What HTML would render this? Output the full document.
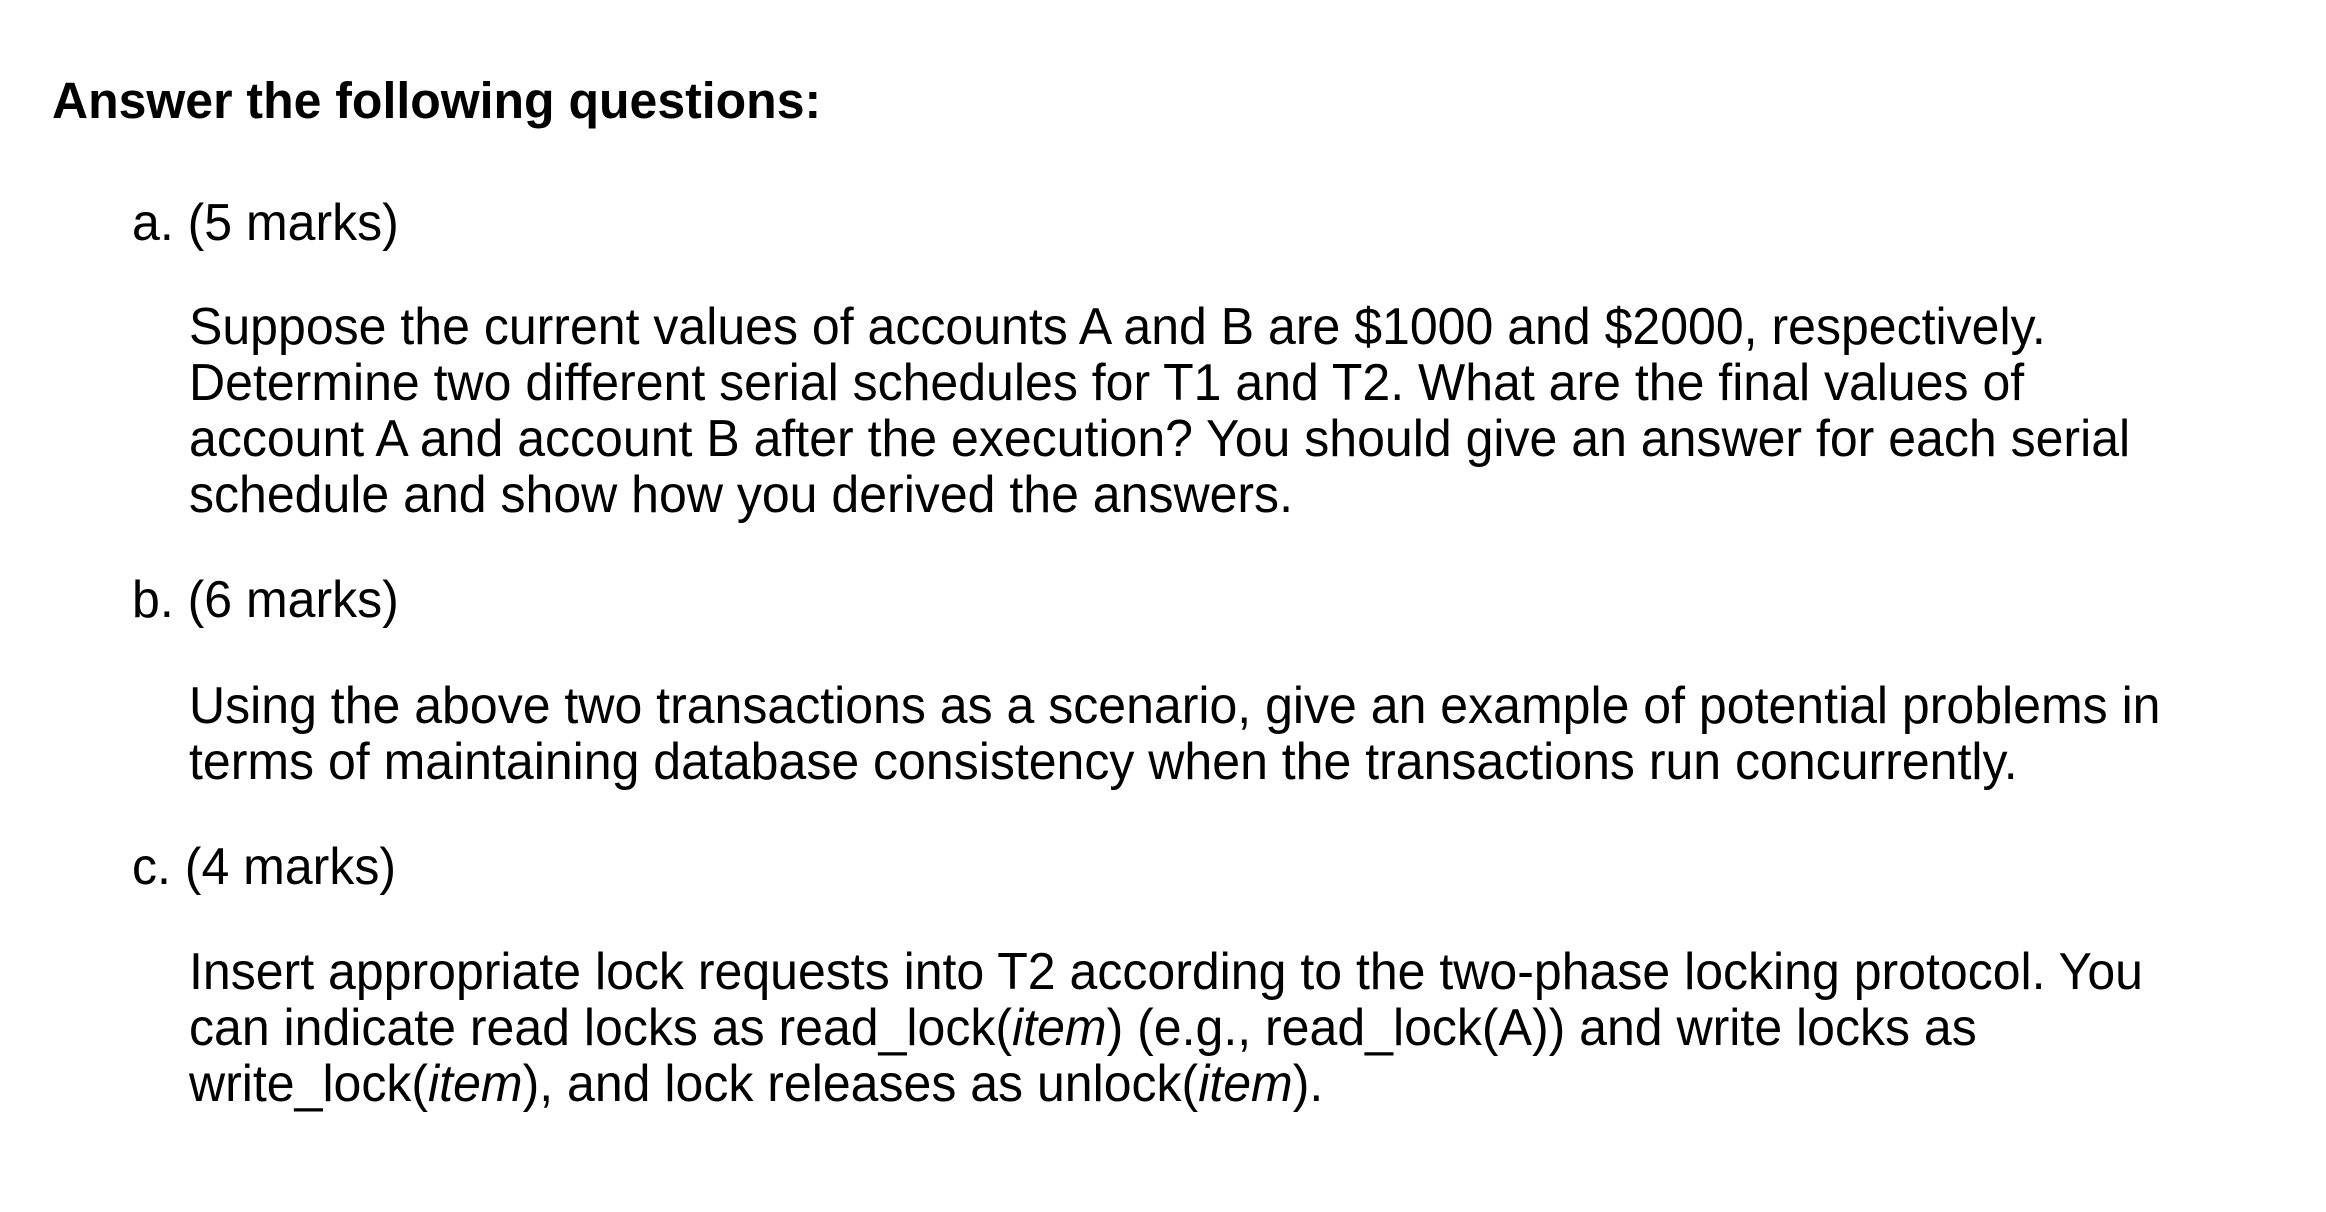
<!DOCTYPE html>
<html><head><meta charset="utf-8"><style>
html,body{margin:0;padding:0;background:#fff;width:2326px;height:1212px;overflow:hidden}
body{position:relative;font-family:"Liberation Sans",Arial,sans-serif;color:#000}
.l{position:absolute;white-space:nowrap;font-size:52px;line-height:56px;transform-origin:0 0;transform:scaleX(0.962)}
.t{font-weight:bold;font-size:51px;transform:scaleX(0.98)}
</style></head><body>
<div class="l t" style="left:52px;top:73px">Answer the following questions:</div>
<div class="l" style="left:132px;top:195px">a. (5 marks)</div>
<div class="l" style="left:189px;top:299px">Suppose the current values of accounts A and B are $1000 and $2000, respectively.</div>
<div class="l" style="left:189px;top:355px">Determine two different serial schedules for T1 and T2. What are the final values of</div>
<div class="l" style="left:189px;top:411px">account A and account B after the execution? You should give an answer for each serial</div>
<div class="l" style="left:189px;top:467px">schedule and show how you derived the answers.</div>
<div class="l" style="left:132px;top:572px">b. (6 marks)</div>
<div class="l" style="left:189px;top:678px">Using the above two transactions as a scenario, give an example of potential problems in</div>
<div class="l" style="left:189px;top:734px">terms of maintaining database consistency when the transactions run concurrently.</div>
<div class="l" style="left:132px;top:839px">c. (4 marks)</div>
<div class="l" style="left:189px;top:944px">Insert appropriate lock requests into T2 according to the two-phase locking protocol. You</div>
<div class="l" style="left:189px;top:1000px">can indicate read locks as read_lock(<i>item</i>) (e.g., read_lock(A)) and write locks as</div>
<div class="l" style="left:189px;top:1056px">write_lock(<i>item</i>), and lock releases as unlock(<i>item</i>).</div>
</body></html>
